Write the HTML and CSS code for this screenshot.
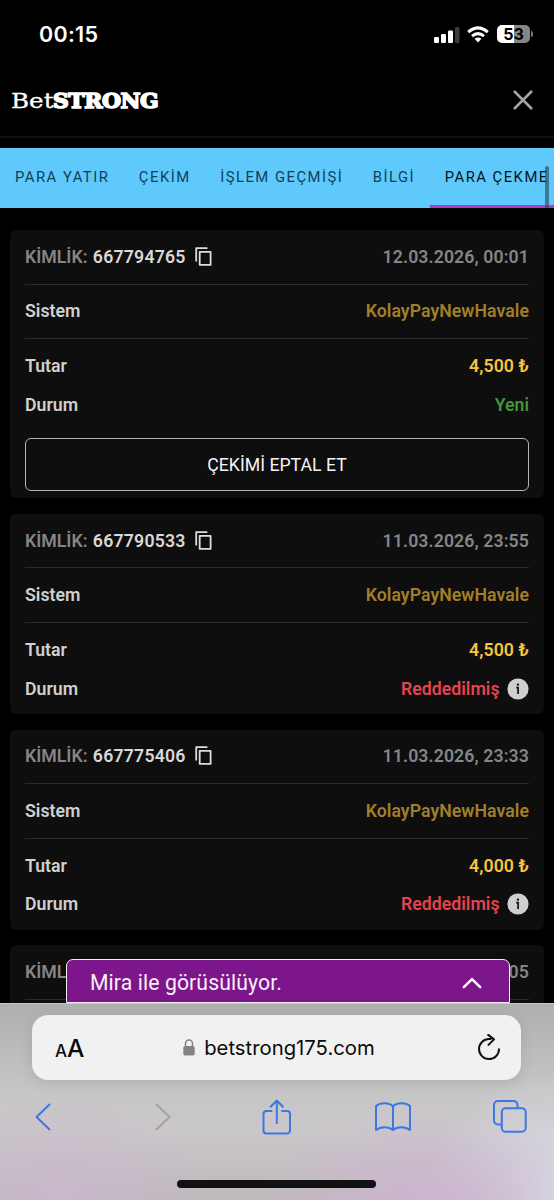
FILE: index.html
```html
<!DOCTYPE html>
<html lang="tr">
<head>
<meta charset="utf-8">
<meta name="viewport" content="width=device-width, initial-scale=1">
<title>BetSTRONG</title>
<link rel="stylesheet" href="styles.css">
</head>
<body>
<svg width="0" height="0" class="defs" aria-hidden="true">
  <symbol id="copy" viewBox="0 0 18 20"><path d="M1.2 14.5V1.2H12.4M4.7 4.9H15.6V17.9H4.7Z" fill="none" stroke="currentColor" stroke-width="1.8" stroke-linejoin="round"/></symbol>
  <symbol id="info" viewBox="0 0 22 22"><circle cx="11" cy="11" r="10.6" fill="#cfcfcf"/><rect x="9.9" y="5.6" width="2.1" height="2" fill="#111"/><path d="M9.2 9.6H11.1V16" fill="none" stroke="#111" stroke-width="1.7"/></symbol>
</svg>
<div class="phone">
  <div class="status">
    <span class="clock">00:15</span>
    <div class="indicators">
      <svg class="signal" width="26" height="17" viewBox="0 0 26 17"><g fill="#fff"><rect x="0" y="11" width="5" height="6" rx="1.2"/><rect x="7" y="8" width="5" height="9" rx="1.2"/><rect x="14" y="4.5" width="5" height="12.5" rx="1.2"/></g><rect x="21" y="1" width="4.5" height="16" rx="1.2" fill="#3b3b3b"/></svg>
      <svg class="wifi" width="22" height="17" viewBox="0 0 22 17"><g fill="none" stroke="#fff" stroke-width="3"><path d="M1.2 6.1Q11-2.3 20.8 6.1"/><path d="M5 10.1Q11 5.2 17 10.1"/></g><path d="M7.6 12.7Q11 10.2 14.4 12.7L11 16.4Z" fill="#fff"/></svg>
      <div class="battery"><span class="level">53</span><i class="nub"></i></div>
    </div>
  </div>
  <header class="header">
    <div class="logo"><span class="logo-light">Bet</span><span class="logo-bold">STRONG</span></div>
    <svg class="close" width="22" height="22" viewBox="0 0 22 22"><path d="M2 2L20 20M20 2L2 20" stroke="#a6a6a6" stroke-width="2.5"/></svg>
  </header>
  <nav class="tabs">
    <span class="tab">PARA YATIR</span><span class="tab">ÇEKİM</span><span class="tab">İŞLEM GEÇMİŞİ</span><span class="tab">BİLGİ</span><span class="tab active">PARA ÇEKME</span>
    <i class="scrollbar"></i>
  </nav>
  <main class="list">
    <section class="card">
      <div class="row line"><span class="muted">KİMLİK: <b class="id">667794765</b><svg class="copy"><use href="#copy"/></svg></span><span class="muted date">12.03.2026, 00:01</span></div>
      <div class="row line"><span>Sistem</span><span class="system">KolayPayNewHavale</span></div>
      <div class="details">
        <div class="row"><span>Tutar</span><span class="amount">4,500 ₺</span></div>
        <div class="row"><span>Durum</span><span class="new">Yeni</span></div>
      </div>
      <button class="cancel">ÇEKİMİ EPTAL ET</button>
    </section>
    <section class="card">
      <div class="row line"><span class="muted">KİMLİK: <b class="id">667790533</b><svg class="copy"><use href="#copy"/></svg></span><span class="muted date">11.03.2026, 23:55</span></div>
      <div class="row line"><span>Sistem</span><span class="system">KolayPayNewHavale</span></div>
      <div class="details">
        <div class="row"><span>Tutar</span><span class="amount">4,500 ₺</span></div>
        <div class="row"><span>Durum</span><span class="rejected">Reddedilmiş<svg class="info"><use href="#info"/></svg></span></div>
      </div>
    </section>
    <section class="card">
      <div class="row line"><span class="muted">KİMLİK: <b class="id">667775406</b><svg class="copy"><use href="#copy"/></svg></span><span class="muted date">11.03.2026, 23:33</span></div>
      <div class="row line"><span>Sistem</span><span class="system">KolayPayNewHavale</span></div>
      <div class="details">
        <div class="row"><span>Tutar</span><span class="amount">4,000 ₺</span></div>
        <div class="row"><span>Durum</span><span class="rejected">Reddedilmiş<svg class="info"><use href="#info"/></svg></span></div>
      </div>
    </section>
    <section class="card">
      <div class="row line"><span class="muted">KİML</span><span class="muted date">05</span></div>
    </section>
    <div class="chat"><span>Mira ile görüsülüyor.</span><svg width="20" height="12" viewBox="0 0 20 12"><path d="M1.8 10.2L10 2.2L18.2 10.2" fill="none" stroke="#fff" stroke-width="2.5" stroke-linecap="round"/></svg></div>
  </main>
  <footer class="safari">
    <div class="address">
      <span class="aa"><small>A</small>A</span>
      <span class="url"><svg width="12" height="17" viewBox="0 0 12 17"><rect x="0.3" y="7" width="11.4" height="9.5" rx="1.8" fill="#838383"/><path d="M2.5 8V4.6a3.5 3.5 0 0 1 7 0V8" fill="none" stroke="#838383" stroke-width="1.5"/></svg>betstrong175.com</span>
      <svg class="reload" width="24" height="28" viewBox="0 0 24 28"><path d="M13.6 5.1H12A10 10 0 1 0 22 15.2M11.2 .9L17 5.4L11.5 10.9" fill="none" stroke="#111" stroke-width="2" stroke-linecap="round" stroke-linejoin="round"/></svg>
    </div>
    <div class="toolbar">
      <svg class="back" width="16" height="28" viewBox="0 0 16 28"><path d="M14.5 1.5L1.5 14L14.5 26.5" class="stroke"/></svg>
      <svg class="forward" width="16" height="28" viewBox="0 0 16 28"><path d="M1.5 1.5L14.5 14L1.5 26.5" class="stroke off"/></svg>
      <svg class="share" width="30" height="36" viewBox="0 0 30 36"><path d="M9.5 12H4.5a3 3 0 0 0-3 3V31.5a3 3 0 0 0 3 3H25a3 3 0 0 0 3-3V15a3 3 0 0 0-3-3H20M14.8 24V1.5M8.7 7.7L14.8 1.5L20.9 7.7" class="stroke"/></svg>
      <svg class="book" width="36" height="30" viewBox="0 0 36 30"><path d="M18 4.5V28M18 4.5C14.5 .5 5.5.1 1 4V28C5.5 24.2 14 24.2 18 28C22 24.2 30.5 24.2 35 28V4C30.5.1 21.5.5 18 4.5Z" class="stroke"/></svg>
      <svg width="34" height="33" viewBox="0 0 34 33"><path d="M8.5 24.5H5a4 4 0 0 1-4-4V5a4 4 0 0 1 4-4H20.5a4 4 0 0 1 4 4V8M12.5 8.3H29a3.7 3.7 0 0 1 3.7 3.7V28a3.7 3.7 0 0 1-3.7 3.7H12.5A3.7 3.7 0 0 1 8.8 28V12a3.7 3.7 0 0 1 3.7-3.7Z" class="stroke"/></svg>
    </div>
    <div class="home"></div>
  </footer>
</div>
</body>
</html>
```
FILE: styles.css
```css
* { box-sizing: border-box; }
body { margin: 0; background: #000; font-family: Roboto, sans-serif; }
svg { display: block; flex: none; }
.defs { position: absolute; }
.phone { width: 554px; height: 1200px; display: flex; flex-direction: column; overflow: hidden; background: #000; color: #d0d0d0; }

.status { flex: none; height: 68px; padding: 0 21px 0 39px; display: flex; align-items: center; justify-content: space-between; font-family: Inter, sans-serif; }
.clock { font-size: 21.5px; font-weight: 600; color: #fff; letter-spacing: .3px; }
.indicators { display: flex; align-items: center; }
.wifi { margin: 0 8px 0 7px; }
.battery { display: flex; align-items: center; gap: 1px; }
.level { width: 33px; height: 18px; border-radius: 5px; background: linear-gradient(90deg, #fff 53%, #858585 53%); color: #000; font-size: 16px; font-weight: 700; line-height: 18px; text-align: center; }
.nub { width: 2px; height: 6px; border-radius: 0 2px 2px 0; background: #777; }

.header { flex: none; height: 70px; padding: 0 20px 4px 11px; display: flex; align-items: center; justify-content: space-between; border-bottom: 2px solid #101010; }
.logo { display: flex; padding-top: 2px; font-family: "DejaVu Serif", serif; font-size: 20.5px; line-height: 26px; color: #fff; }
.logo-light { width: 34px; margin-right: 8px; transform: scaleX(1.2); transform-origin: left; -webkit-text-stroke: .3px #fff; }
.logo-bold { font-weight: 700; letter-spacing: -.4px; -webkit-text-stroke: 1.6px #fff; transform: scaleX(1.065); transform-origin: left; }

.tabs { flex: none; position: relative; margin-top: 10px; height: 60px; display: flex; overflow: hidden; background: #5fc9fb; white-space: nowrap; }
.tab { flex: none; padding: 0 14.5px 0 15px; line-height: 58px; font-size: 14.8px; letter-spacing: 1.5px; color: #10405a; }
.active { padding-right: 2px; color: #03141e; border-bottom: 3px solid #b13bc8; }
.tabs .active { flex: 1; }
.scrollbar { position: absolute; right: 5px; top: 18px; width: 4px; height: 42px; border-radius: 2px 2px 0 0; background: rgba(45, 75, 95, .65); }

.list { position: relative; flex: none; height: 795px; padding: 22px 10px 0; display: flex; flex-direction: column; gap: 15.6px; overflow: hidden; }
.card { flex: none; padding: 0 15px 6px; border-radius: 6px; background: #0e0e0e; font-size: 17.7px; font-weight: 600; }
.row { height: 38.6px; display: flex; align-items: center; justify-content: space-between; }
.row span { display: flex; align-items: center; white-space: pre; }
.line { height: 54.5px; border-bottom: 1px solid #2b2b2b; }
.muted { color: #858585; }
.id { margin-left: 1px; font-weight: 600; color: #d8d8d8; letter-spacing: .2px; }
.row .date { letter-spacing: .1px; }
.copy { width: 18px; height: 20px; margin-left: 9px; color: #ddd; }
.details { padding-top: 8px; }
.row .system { color: #a17e29; letter-spacing: .05px; }
.row .amount { color: #f8c23e; letter-spacing: .1px; }
.row .new { color: #43933b; }
.row .rejected { color: #e5434f; }
.info { width: 22px; height: 22px; margin-left: 7.5px; }
.cancel { display: block; width: 100%; height: 53px; margin: 14px 0 1px; border: 1px solid #b4b4b4; border-radius: 6px; background: none; color: #f4f4f4; font: 400 17.7px Roboto, sans-serif; }

.chat { position: absolute; left: 66px; bottom: 0; width: 444px; height: 44px; padding: 3px 27px 0 23px; display: flex; align-items: center; justify-content: space-between; border: 1.5px solid #eee; border-radius: 7px 7px 0 0; background: #7e168b; color: #f8f0f9; font-size: 21.2px; letter-spacing: .1px; }

.safari { flex: 1; padding: 11px 33px 0 32px; border-top: 1px solid #c8c8c8; background: radial-gradient(ellipse 170px 90px at 430px 200px, rgba(207, 181, 211, .9), transparent), radial-gradient(ellipse 150px 90px at 60px 190px, rgba(203, 184, 207, .8), transparent), radial-gradient(ellipse 130px 120px at 554px 190px, rgba(220, 223, 235, .9), transparent), linear-gradient(#afafaf, #c7c6c7 45%, #cac7ca 65%, #beb7bb); }
.address { height: 65px; padding: 0 20px 0 23px; display: flex; align-items: center; justify-content: space-between; border-radius: 16px; background: #f1f1f1; box-shadow: 0 3px 14px rgba(0, 0, 0, .1); font-family: Inter, sans-serif; color: #0b0b0b; }
.aa { padding-top: 3px; font-size: 24.5px; font-weight: 500; line-height: 30px; }
.aa small { font-size: 17px; }
.url { display: flex; align-items: center; gap: 9.5px; margin-left: -4px; font-size: 20.3px; }
.toolbar { height: 75px; padding: 0 0 2px 2.5px; margin-right: -6px; display: flex; align-items: center; }
.back { margin-right: 104.5px; }
.forward { margin-right: 91px; }
.share { margin-right: 83px; }
.book { margin-right: 82px; }
.stroke { fill: none; stroke: #3b78e2; stroke-width: 2; stroke-linecap: round; stroke-linejoin: round; }
.off { stroke: #a2a2a4; }
.home { width: 199px; height: 8px; margin: 25px auto 0; border-radius: 4px; background: #111; }
```
